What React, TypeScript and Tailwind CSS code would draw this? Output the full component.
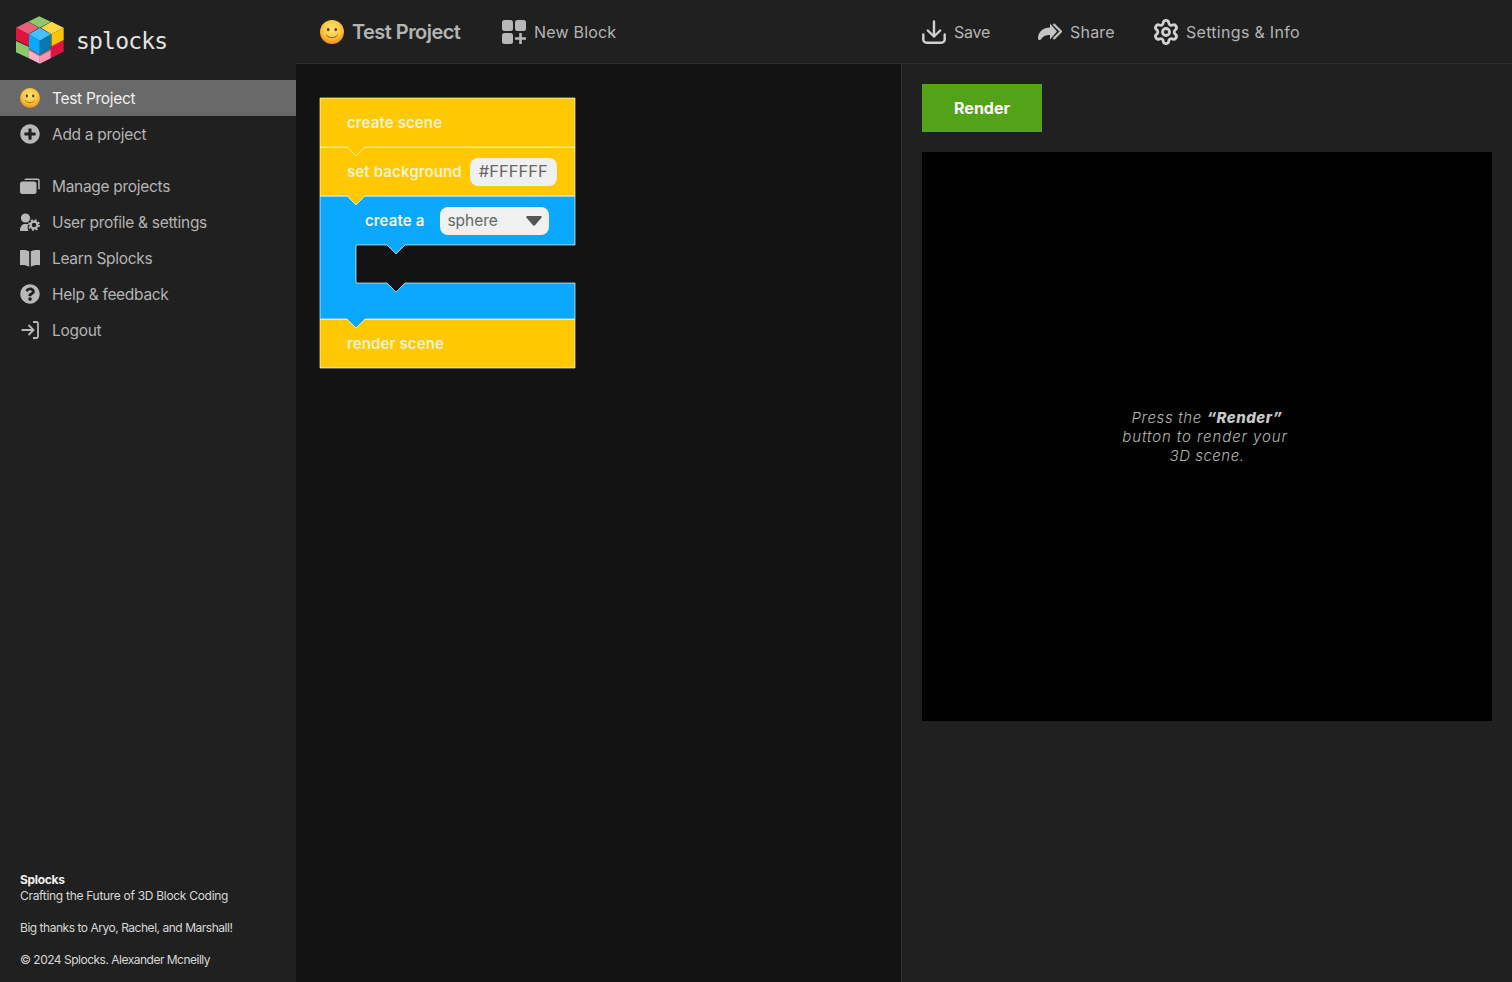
import React from "react";
import { Settings } from "lucide-react";
import { FaPlusCircle, FaQuestionCircle } from "react-icons/fa";

const Smiley = ({ className }: { className: string }) => (
  <svg viewBox="0 0 24 24" className={className}>
    <defs>
      <radialGradient id="face" cx="50%" cy="38%" r="62%">
        <stop offset="0%" stopColor="#ffe27a" />
        <stop offset="60%" stopColor="#fdc83c" />
        <stop offset="100%" stopColor="#f08a1c" />
      </radialGradient>
    </defs>
    <circle cx="12" cy="12" r="12" fill="url(#face)" />
    <ellipse cx="8.2" cy="9.6" rx="1.3" ry="1.7" fill="#5b3a17" />
    <ellipse cx="15.8" cy="9.6" rx="1.3" ry="1.7" fill="#5b3a17" />
    <path d="M6.5 15.2c1.5 1.7 3.4 2.5 5.5 2.5s4-.8 5.5-2.5" fill="none" stroke="#8a5a1c" strokeWidth="1" strokeLinecap="round" />
  </svg>
);

const Logo = () => (
  <svg viewBox="33 30 145 150" className="h-[50px] w-[48px] flex-none">
    <polygon points="70,50 103,33 138,50 105,68" fill="#8fc76a" />
    <polygon points="70,50 105,68 105,72 70,56" fill="#3f7f2a" />
    <polygon points="33,68 68,50 102,68 70,88" fill="#e8607a" />
    <polygon points="33,68 72,88 72,124 33,105" fill="#e0143f" />
    <polygon points="33,108 72,126 72,160 33,142" fill="#8fc76a" />
    <polygon points="138,122 177,105 177,140 138,160" fill="#e0143f" />
    <polygon points="108,68 140,50 177,68 140,88" fill="#ffd54a" />
    <polygon points="140,88 177,68 177,105 140,124" fill="#ffc400" />
    <polygon points="130,82 140,88 140,124 130,120" fill="#7d7a24" />
    <polygon points="72,130 105,150 138,130 138,136 105,156 72,136" fill="#b8606f" />
    <polygon points="72,136 105,154 105,177 72,160" fill="#ffb0c8" />
    <polygon points="105,154 138,136 138,160 105,177" fill="#ff94b0" />
    <polygon points="72,88 105,68 138,88 105,108" fill="#45bfff" />
    <polygon points="72,88 105,108 105,150 72,130" fill="#0aa8ff" />
    <polygon points="105,108 138,88 138,130 105,150" fill="#0a78b0" />
  </svg>
);

const ManageIcon = () => (
  <svg viewBox="0 0 20 16" className="h-4 w-5 fill-[#b8b8b8]">
    <rect x="0" y="3.5" width="16.5" height="12.5" rx="2.5" />
    <path d="M4.5 1.5c.6-.6 1-.9 2-.9h11.2c1.2 0 2 .8 2 2v8.6h-1.5V2.1H4.5z" />
  </svg>
);

const UserGearIcon = () => (
  <svg viewBox="0 0 20 18" className="h-[18px] w-5">
    <circle cx="5.5" cy="5" r="4.6" fill="#b8b8b8" />
    <path d="M0 18c0-4.5 2-7 5-7h3.5c-1.2 2-1.2 5 0 7z" fill="#b8b8b8" />
    <circle cx="14" cy="12" r="3.4" fill="none" stroke="#b8b8b8" strokeWidth="2.2" />
    <circle cx="14" cy="12" r="5" fill="none" stroke="#b8b8b8" strokeWidth="1.8" strokeDasharray="2 1.93" />
  </svg>
);

const BookIcon = () => (
  <svg viewBox="0 0 20 18" className="h-[18px] w-5 fill-[#b8b8b8]">
    <path d="M0 1.200C3.500.8 6.500 1 9.200 2.400V17.800C6.500 16.300 3.500 15.800 0 16.200Z" />
    <path d="M20 1.200C16.500.8 13.500 1 10.800 2.400V17.800C13.500 16.300 16.500 15.800 20 16.200Z" />
  </svg>
);

const LogoutIcon = () => (
  <svg viewBox="0 0 20 18" fill="none" stroke="#b8b8b8" strokeWidth="1.8" className="h-[18px] w-5">
    <path d="M1.500 9H13.500M8.500 4l5 5-5 5" />
    <path d="M13 1h3.500A1.500 1.500 0 0 1 18 2.500v13a1.500 1.500 0 0 1-1.500 1.500H13" />
  </svg>
);

const NewBlockIcon = () => (
  <svg viewBox="0 0 24 24" className="h-6 w-6 fill-[#b8b8b8]">
    <rect x="0" y="0" width="11" height="11" rx="2.500" />
    <rect x="13" y="0" width="11" height="11" rx="2.500" />
    <rect x="0" y="13" width="11" height="11" rx="2.500" />
    <path d="M17.200 13h2.600v4.200H24v2.600h-4.200V24h-2.600v-4.200H13v-2.600h4.200z" />
  </svg>
);

const SaveIcon = () => (
  <svg viewBox="0 0 24 24" fill="none" stroke="#d0d0d0" strokeWidth="2.400" strokeLinecap="round" strokeLinejoin="round" className="h-6 w-6">
    <path d="M12 1.500V16.500M5.800 10.500 12 16.500l6.200-6" />
    <path d="M1.300 14.500v5a3.200 3.200 0 0 0 3.200 3.200h15a3.200 3.200 0 0 0 3.200-3.200v-5" />
  </svg>
);

const ShareIcon = () => (
  <svg viewBox="0 0 24 17" className="h-[17px] w-6">
    <path d="M12 .5 19 8.500 12 16.500V12C8 12 5 13 3 16.500 1.500 17.500 0 17 0 15.500 0 9 5 4.500 12 4.500Z" fill="#c4c4c4" />
    <path d="M15.500.9 23 8.500 15.500 16.100" fill="none" stroke="#c4c4c4" strokeWidth="2.200" />
  </svg>
);

const nav = [
  { label: "Manage projects", icon: <ManageIcon /> },
  { label: "User profile & settings", icon: <UserGearIcon /> },
  { label: "Learn Splocks", icon: <BookIcon /> },
  { label: "Help & feedback", icon: <FaQuestionCircle className="h-5 w-5 text-[#b8b8b8]" /> },
  { label: "Logout", icon: <LogoutIcon /> },
];

const actions = [
  { label: "Save", icon: <SaveIcon />, width: "w-[116px]", spacing: "tracking-[-0.2px]" },
  { label: "Share", icon: <ShareIcon />, width: "w-[116px]", spacing: "tracking-[0.2px]" },
  { label: "Settings & Info", icon: <Settings className="h-7 w-7 flex-none text-[#d0d0d0]" strokeWidth={2.4} />, width: "", spacing: "tracking-[0.3px]" },
];

function Sidebar() {
  return (
    <aside className="flex h-full w-[296px] flex-none flex-col bg-[#202020] font-['Inter',sans-serif] text-[#b4b4b4]">
      <div className="flex h-20 items-center gap-3 pl-4">
        <Logo />
        <span className="pt-[3px] font-['DejaVu_Sans_Mono',monospace] text-[23px] leading-none tracking-[-0.8px] text-[#e4e4e4]">splocks</span>
      </div>
      <div className="flex h-9 items-center gap-3 bg-[#696969] pl-5 text-[#f0f0f0]">
        <Smiley className="h-5 w-5" />
        <span className="pt-px text-[15.5px] tracking-[-0.3px]">Test Project</span>
      </div>
      <div className="flex h-9 items-center gap-3 pl-5">
        <FaPlusCircle className="h-5 w-5 text-[#b8b8b8]" />
        <span className="pt-px text-[15.5px] tracking-[-0.3px]">Add a project</span>
      </div>
      <nav className="mt-4 flex flex-col">
        {nav.map((item) => (
          <div key={item.label} className="flex h-9 items-center gap-3 pl-5">
            <span className="flex w-5 justify-center">{item.icon}</span>
            <span className="pt-px text-[15.5px] tracking-[-0.3px]">{item.label}</span>
          </div>
        ))}
      </nav>
      <div className="mt-auto pb-[14px] pl-5 text-[12px] leading-4 text-[#d8d8d8]">
        <div className="font-bold tracking-[-0.3px] text-[#f0f0f0]">Splocks</div>
        <div className="tracking-[-0.3px]">Crafting the Future of 3D Block Coding</div>
        <div className="mt-4 tracking-[-0.47px]">Big thanks to Aryo, Rachel, and Marshall!</div>
        <div className="mt-4 tracking-[-0.5px]">© 2024 Splocks. Alexander Mcneilly</div>
      </div>
    </aside>
  );
}

function Header() {
  return (
    <header className="flex h-16 flex-none border-b border-[#2e2e2e] bg-[#202020] font-['Inter',sans-serif] text-[#b4b4b4]">
      <div className="flex w-[606px] flex-none items-center pl-6">
        <div className="flex w-[182px] items-center gap-2">
          <Smiley className="h-6 w-6" />
          <span className="text-[20px] font-semibold tracking-[-0.55px]">Test Project</span>
        </div>
        <div className="flex items-center gap-2">
          <NewBlockIcon />
          <span className="text-[16px] tracking-[0.2px]">New Block</span>
        </div>
      </div>
      <div className="flex items-center pl-5">
        {actions.map((a) => (
          <div key={a.label} className={`flex items-center gap-2 ${a.width}`}>
            <span className="flex w-6 justify-center">{a.icon}</span>
            <span className={`text-[16px] ${a.spacing}`}>{a.label}</span>
          </div>
        ))}
      </div>
    </header>
  );
}

const blockText = "pt-px font-['Inter',sans-serif] text-[15px] font-semibold tracking-[0.12px] text-[#fff3d0]";

function Blocks() {
  const line = "rgba(255,255,255,0.65)";
  return (
    <div className="relative h-[272px] w-[257px]">
      <svg viewBox="0 0 257 272" className="absolute inset-0 h-full w-full">
        <path d="M1 222H256V271H1Z" fill="#ffc800" stroke={line} />
        <path d="M1 99H256V148H86L77 157L68 148H37V186H68L77 195L86 186H256V222H46L37 231L28 222H1Z" fill="#0aa8ff" stroke={line} />
        <path d="M1 50H256V99H46L37 108L28 99H1Z" fill="#ffc800" stroke={line} />
        <path d="M1 1H256V50H46L37 59L28 50H1Z" fill="#ffc800" stroke={line} />
      </svg>
      <div className="relative flex h-[50px] items-center pl-7 pt-0.5">
        <span className={blockText}>create scene</span>
      </div>
      <div className="relative flex h-[49px] items-center gap-2 pl-7">
        <span className={blockText}>set background</span>
        <span className="flex h-7 w-[87px] items-center justify-center rounded-lg bg-[#f0f0f0] font-['Inter',sans-serif] text-[16.5px] text-[#666]">#FFFFFF</span>
      </div>
      <div className="relative flex h-[49px] items-center gap-4 pl-[46px]">
        <span className={`${blockText} !text-[#eef8ff]`}>create a</span>
        <span className="flex h-7 w-[109px] items-center justify-between rounded-lg bg-[#f0f0f0] px-[7px] font-['Inter',sans-serif] text-[15.5px] text-[#666]">
          sphere
          <svg viewBox="0 0 16 10" className="h-2.5 w-4 fill-[#555]"><path d="M1.500 0h13c1 0 1.600 1 1 1.800L9 9.200c-.5.6-1.500.6-2 0L.5 1.800C-.1 1 .5 0 1.500 0z" /></svg>
        </span>
      </div>
      <div className="h-[74px]" />
      <div className="relative flex h-[49px] items-center pl-7">
        <span className={blockText}>render scene</span>
      </div>
    </div>
  );
}

function RenderPanel() {
  return (
    <section className="flex flex-1 flex-col gap-5 bg-[#202020] p-5">
      <button className="flex h-12 w-[120px] items-center justify-center bg-[#52a318] font-['Inter',sans-serif] text-[16px] font-bold text-white">Render</button>
      <div className="flex h-[569px] items-center justify-center bg-black text-center font-['Inter',sans-serif] text-[15px] font-light italic leading-[19px] tracking-[0.5px] text-[#b4b4b4]">
        <p>
          <span className="tracking-[0.65px]">Press the</span> <b className="font-extrabold text-[#c8c8c8]">“Render”</b>
          <br />
          <span className="pr-[4px] tracking-[0.9px]">button to render your</span>
          <br />
          3D scene.
        </p>
      </div>
    </section>
  );
}

export default function App() {
  return (
    <div className="flex h-[982px] w-[1512px] overflow-hidden bg-[#202020]">
      <Sidebar />
      <main className="flex min-w-0 flex-1 flex-col">
        <Header />
        <div className="flex min-h-0 flex-1">
          <section className="w-[606px] flex-none border-r border-[#2e2e2e] bg-[#131313] pl-[23px] pt-[33px]">
            <Blocks />
          </section>
          <RenderPanel />
        </div>
      </main>
    </div>
  );
}
